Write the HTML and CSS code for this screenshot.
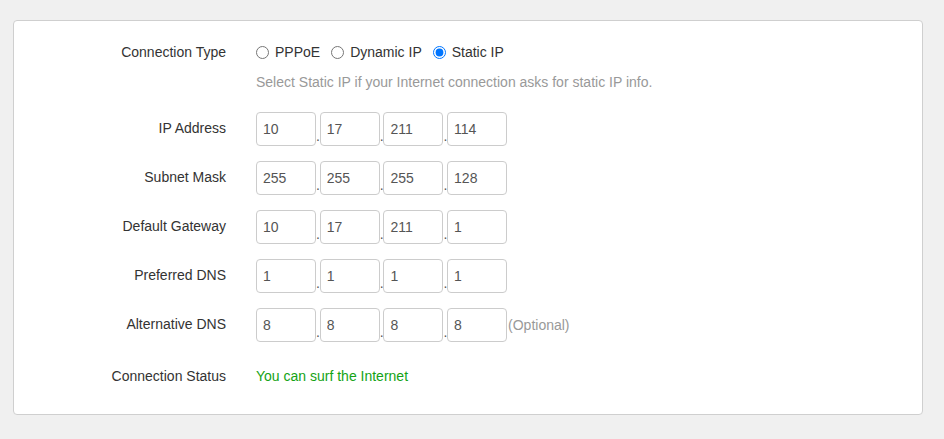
FILE: index.html
```html
<!DOCTYPE html>
<html lang="en">
<head>
<meta charset="utf-8">
<title>Internet Settings</title>
<link rel="stylesheet" href="styles.css">
</head>
<body>
<div class="card">
  <div class="row row-type">
    <div class="label">Connection Type</div>
    <div class="ctrl radios">
      <label class="radio"><input type="radio" name="ct"><span>PPPoE</span></label>
      <label class="radio"><input type="radio" name="ct"><span>Dynamic IP</span></label>
      <label class="radio"><input type="radio" name="ct" checked><span>Static IP</span></label>
    </div>
  </div>
  <div class="row row-hint">
    <div class="label"></div>
    <div class="ctrl hint">Select Static IP if your Internet connection asks for static IP info.</div>
  </div>
  <div class="row row-ip first">
    <div class="label">IP Address</div>
    <div class="ctrl ip"><input class="oct" value="10"><span class="dot">.</span><input class="oct" value="17"><span class="dot">.</span><input class="oct" value="211"><span class="dot">.</span><input class="oct" value="114"></div>
  </div>
  <div class="row row-ip">
    <div class="label">Subnet Mask</div>
    <div class="ctrl ip"><input class="oct" value="255"><span class="dot">.</span><input class="oct" value="255"><span class="dot">.</span><input class="oct" value="255"><span class="dot">.</span><input class="oct" value="128"></div>
  </div>
  <div class="row row-ip">
    <div class="label">Default Gateway</div>
    <div class="ctrl ip"><input class="oct" value="10"><span class="dot">.</span><input class="oct" value="17"><span class="dot">.</span><input class="oct" value="211"><span class="dot">.</span><input class="oct" value="1"></div>
  </div>
  <div class="row row-ip">
    <div class="label">Preferred DNS</div>
    <div class="ctrl ip"><input class="oct" value="1"><span class="dot">.</span><input class="oct" value="1"><span class="dot">.</span><input class="oct" value="1"><span class="dot">.</span><input class="oct" value="1"></div>
  </div>
  <div class="row row-ip">
    <div class="label">Alternative DNS</div>
    <div class="ctrl ip"><input class="oct" value="8"><span class="dot">.</span><input class="oct" value="8"><span class="dot">.</span><input class="oct" value="8"><span class="dot">.</span><input class="oct" value="8"><span class="opt">(Optional)</span></div>
  </div>
  <div class="row row-status">
    <div class="label">Connection Status</div>
    <div class="ctrl status">You can surf the Internet</div>
  </div>
</div>
</body>
</html>
```
FILE: styles.css
```css
* { box-sizing: border-box; }
html, body { margin: 0; padding: 0; }
body {
  background: #f0f0f0;
  font-family: "Liberation Sans", Arial, sans-serif;
  font-size: 14px;
  color: #333;
  padding: 20px 21px 0 13px;
}
.card {
  background: #fff;
  border: 1px solid #cfcfcf;
  border-radius: 4px;
  height: 395px;
  padding: 14px 0 0 0;
}
.row {
  display: grid;
  grid-template-columns: 212px 1fr;
  column-gap: 30px;
  align-items: center;
}
.label {
  text-align: right;
  color: #333;
  line-height: 20px;
}
.row-type { height: 34px; }
.radios { display: flex; align-items: center; }
.radio {
  display: inline-flex;
  align-items: center;
  margin-right: 11px;
  color: #333;
  line-height: 20px;
}
.radio input {
  margin: 0 6px 0 0;
  width: 13px;
  height: 13px;
}
.row-hint { margin-top: 3px; }
.hint { color: #999; line-height: 20px; }
.row-ip { margin-top: 15px; height: 34px; }
.row-ip.first { margin-top: 20px; }
.row-ip .label { padding-bottom: 2px; }
.ip { display: flex; align-items: flex-end; }
.oct {
  width: 60px;
  height: 34px;
  border: 1px solid #ccc;
  border-radius: 4px;
  padding: 0 6px;
  font-family: "Liberation Sans", Arial, sans-serif;
  font-size: 14px;
  color: #555;
  background: #fff;
  margin: 0;
  outline: none;
}
.dot {
  width: 3.7px;
  line-height: 14px;
  padding-bottom: 3px;
  color: #555;
  font-size: 14px;
  overflow: visible;
}
.opt {
  color: #999;
  align-self: center;
  margin-left: 1px;
}
.row-status { margin-top: 17px; height: 34px; }
.status { color: #14a314; line-height: 20px; }
```
